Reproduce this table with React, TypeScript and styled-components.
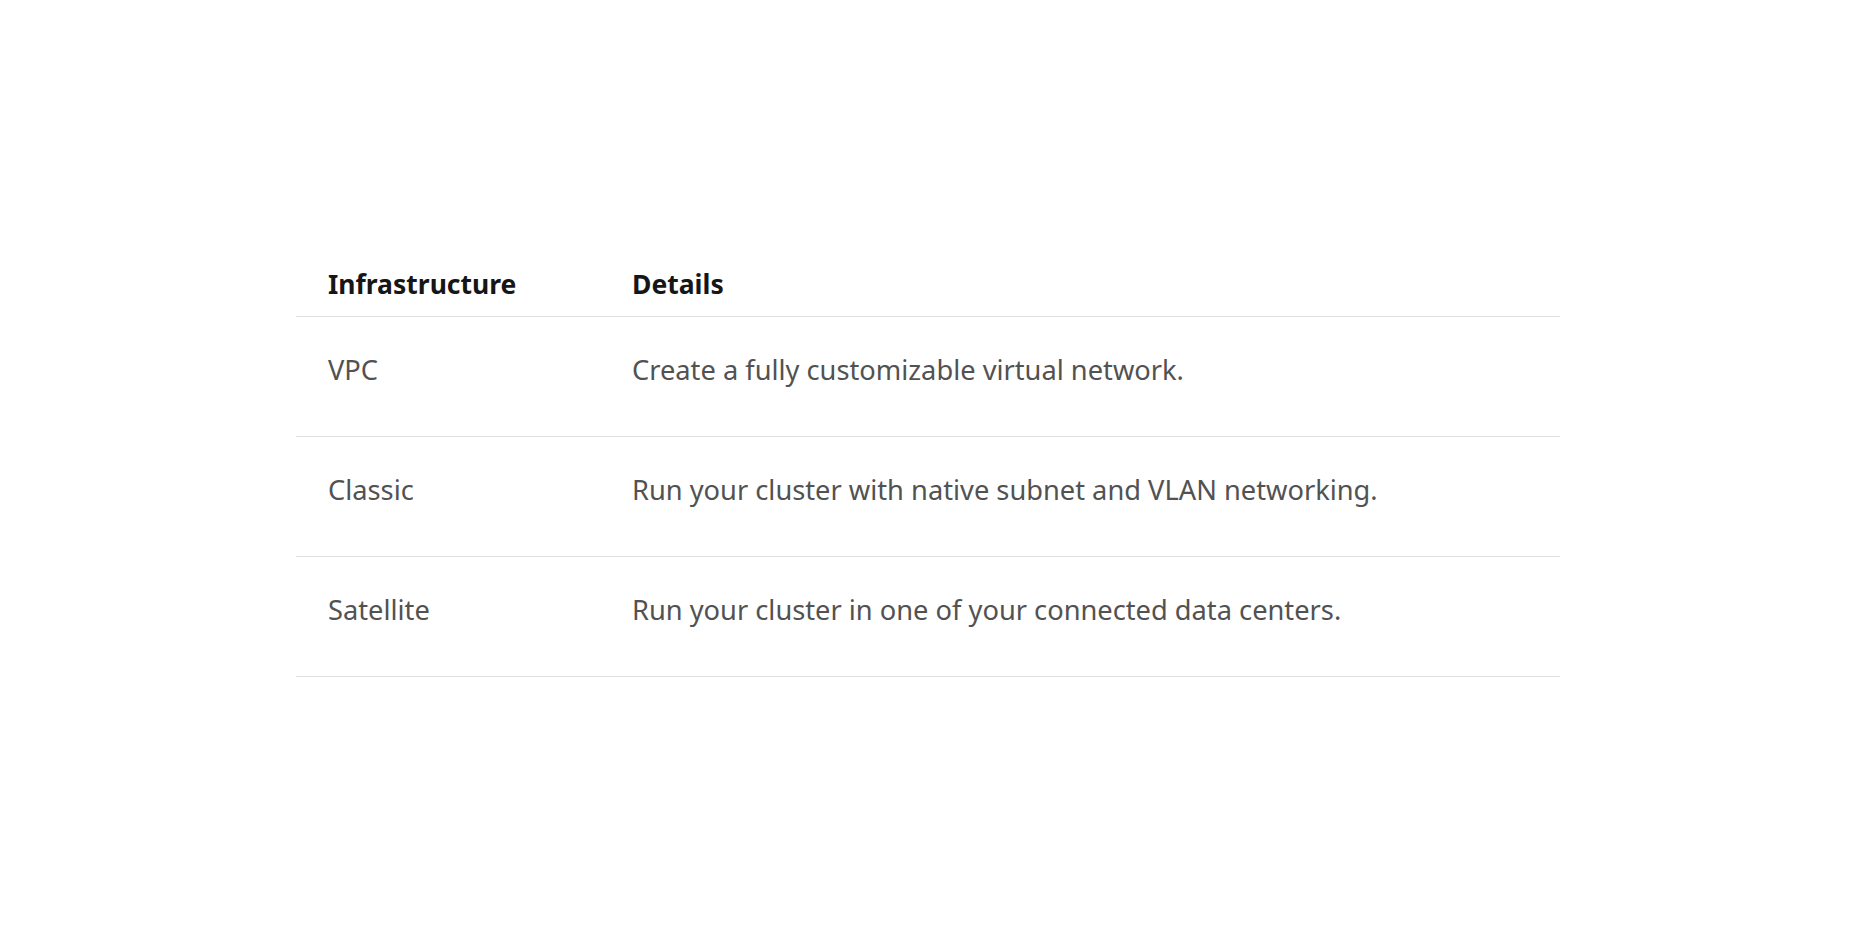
import { FC } from 'react';
import styled, { createGlobalStyle } from 'styled-components';

const GlobalStyle = createGlobalStyle`
	html, body {
		margin: 0;
		padding: 0;
		background: #ffffff;
	}
	body {
		font-family: 'Noto Sans', 'Liberation Sans', sans-serif;
	}
`;

const rows = [
	{ name: 'VPC', details: 'Create a fully customizable virtual network.' },
	{ name: 'Classic', details: 'Run your cluster with native subnet and VLAN networking.' },
	{ name: 'Satellite', details: 'Run your cluster in one of your connected data centers.' },
];

const App: FC = () => {
	return (
		<>
			<GlobalStyle />
			<Page>
				<Table>
					<HeaderRow>
						<HeaderCell>Infrastructure</HeaderCell>
						<HeaderCell>Details</HeaderCell>
					</HeaderRow>
					{rows.map((row) => (
						<BodyRow key={row.name}>
							<BodyCell>{row.name}</BodyCell>
							<BodyCell>{row.details}</BodyCell>
						</BodyRow>
					))}
				</Table>
			</Page>
		</>
	);
};

export default App;

const Page = styled.div`
	width: 100%;
	min-height: 928px;
	padding: 252px 296px 0;
	box-sizing: border-box;
`;

const Table = styled.div`
	display: flex;
	flex-direction: column;
	width: 1264px;
`;

const HeaderRow = styled.div`
	display: grid;
	grid-template-columns: 304px 1fr;
	padding: 14px 0;
	border-bottom: 1px solid #e0e0e0;
`;

const HeaderCell = styled.div`
	padding-left: 32px;
	font-size: 26.5px;
	line-height: 36px;
	font-weight: 700;
	color: #161616;
`;

const BodyRow = styled.div`
	display: grid;
	grid-template-columns: 304px 1fr;
	height: 120px;
	box-sizing: border-box;
	padding-top: 35px;
	border-bottom: 1px solid #e0e0e0;
`;

const BodyCell = styled.div`
	padding-left: 32px;
	font-size: 27.25px;
	line-height: 36px;
	color: #525252;
`;
